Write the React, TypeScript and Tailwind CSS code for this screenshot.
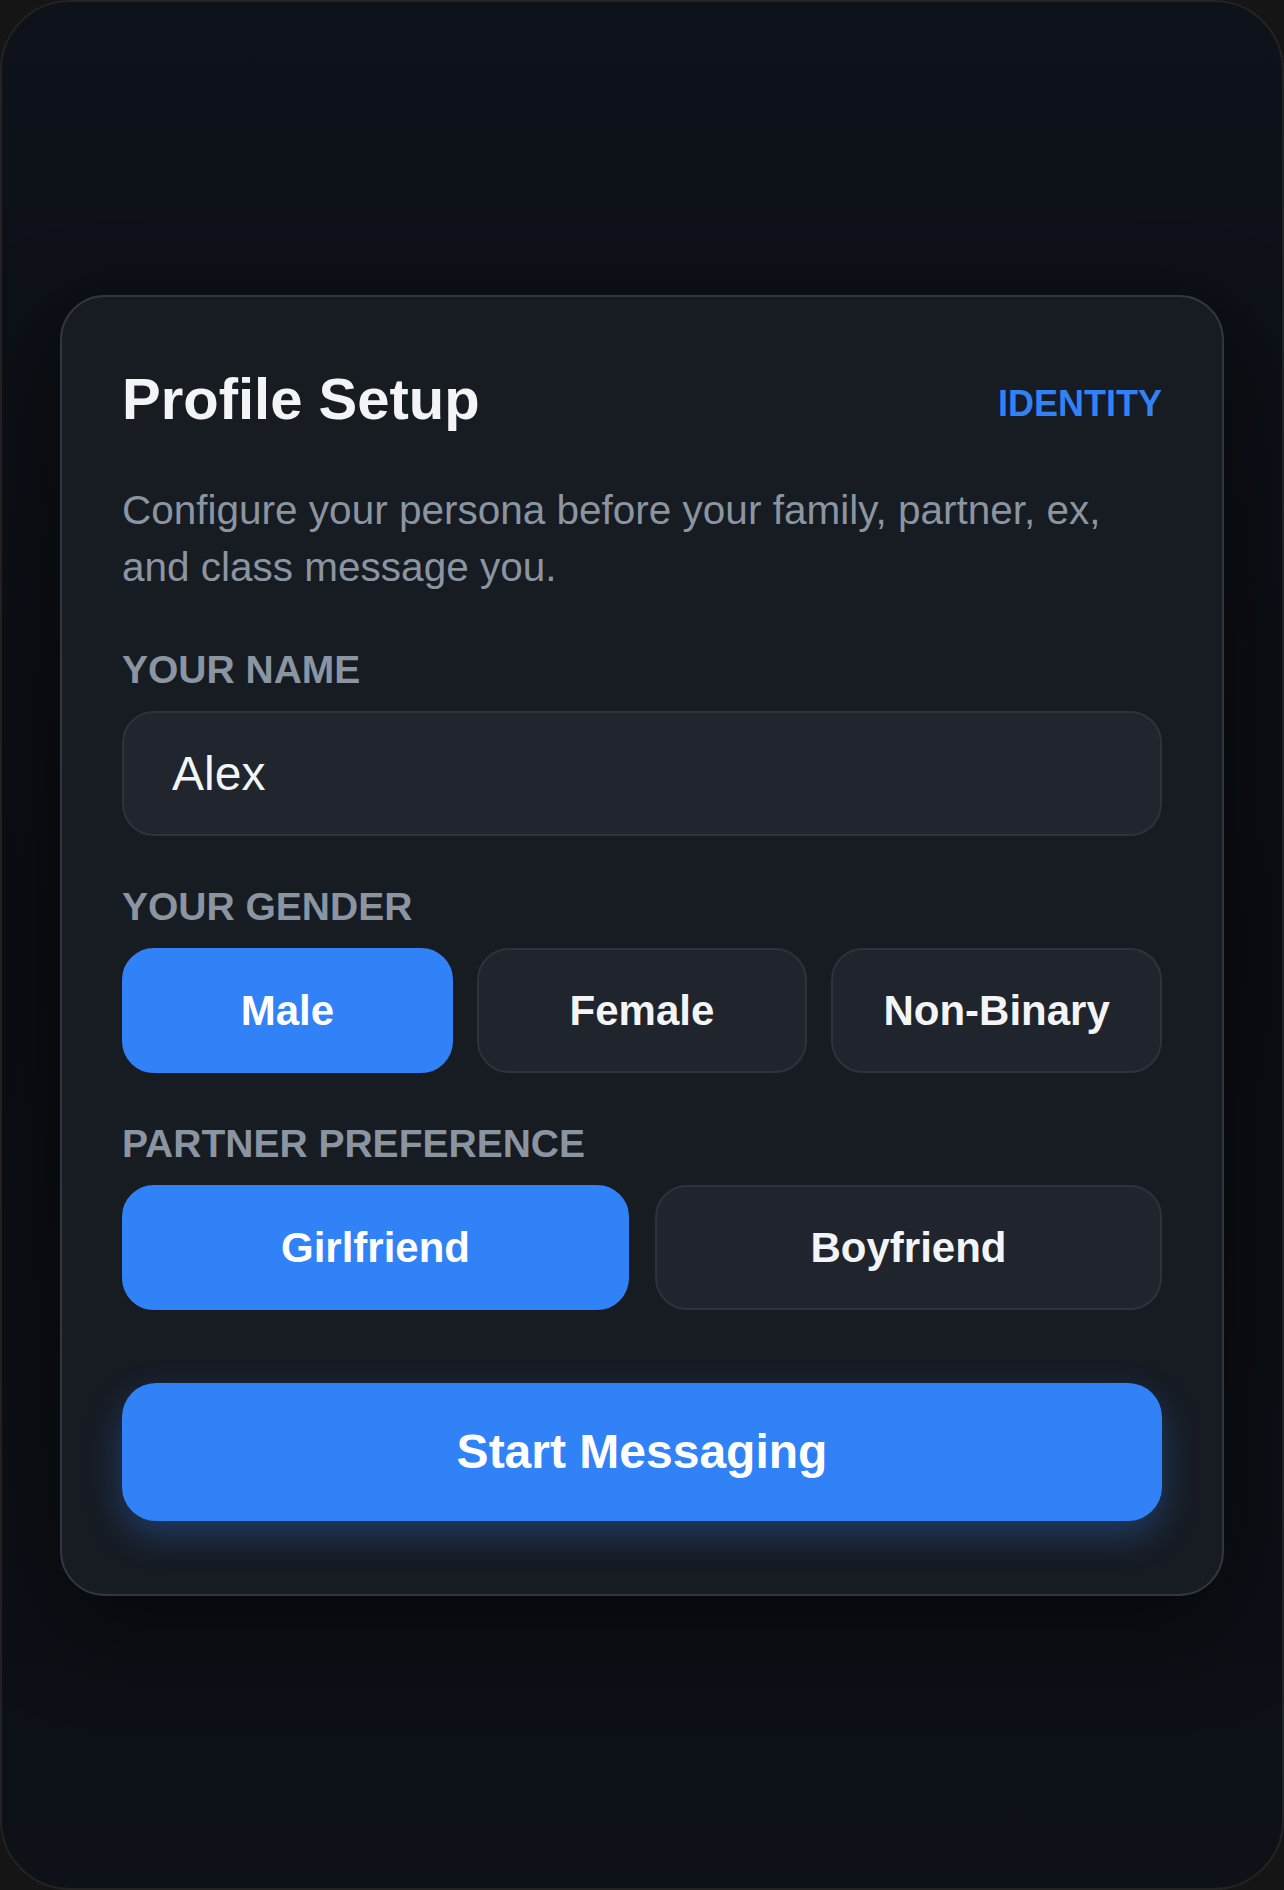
import React, { useState } from "react";

export default function App() {
  const [name, setName] = useState("Alex");
  const [gender, setGender] = useState("Male");
  const [partner, setPartner] = useState("Girlfriend");

  const optionClass = (active: boolean) =>
    active
      ? "h-[125px] rounded-[32px] border-2 border-[#3182f6] bg-[#3182f6] text-[42px] font-bold text-white"
      : "h-[125px] rounded-[32px] border-2 border-[#2e323a] bg-[#20242c] text-[42px] font-bold text-[#f2f4f6]";

  return (
    <div
      className="w-[1284px] h-[1890px] bg-[#151515]"
      style={{ fontFamily: '"Liberation Sans", Arial, sans-serif' }}
    >
      <div className="h-[1890px] w-full rounded-[70px] border-2 border-[#232323] bg-gradient-to-b from-[#0e121a] via-[#0a0d12] to-[#0d1118] flex items-center justify-center px-[58px]">
        <div className="w-full rounded-[45px] border-2 border-[#32363e] bg-[#171b22] px-[60px] pt-[71px] pb-[73px] shadow-[0_30px_90px_rgba(0,0,0,0.55)]">
          <div className="flex items-start justify-between">
            <h1 className="text-[58px] font-bold leading-[62px] text-[#f2f4f6]">
              Profile Setup
            </h1>
            <span className="mt-[14px] text-[36px] font-bold leading-[43px] text-[#3182f6]">
              IDENTITY
            </span>
          </div>

          <p className="mt-[52px] text-[40.5px] leading-[57px] text-[#8b95a1]">
            Configure your persona before your family, partner, ex, and class
            message you.
          </p>

          <div className="mt-[50px] text-[39px] font-bold leading-[47px] text-[#8b95a1]">
            YOUR NAME
          </div>
          <input
            value={name}
            onChange={(e) => setName(e.target.value)}
            className="mt-[18px] block h-[125px] w-full rounded-[32px] border-2 border-[#2e323a] bg-[#21252d] px-[48px] text-[48px] text-[#f2f4f6] outline-none"
          />

          <div className="mt-[47px] text-[39px] font-bold leading-[47px] text-[#8b95a1]">
            YOUR GENDER
          </div>
          <div className="mt-[18px] grid grid-cols-3 gap-[24px]">
            {["Male", "Female", "Non-Binary"].map((g) => (
              <button key={g} onClick={() => setGender(g)} className={optionClass(gender === g)}>
                {g}
              </button>
            ))}
          </div>

          <div className="mt-[47px] text-[39px] font-bold leading-[47px] text-[#8b95a1]">
            PARTNER PREFERENCE
          </div>
          <div className="mt-[18px] grid grid-cols-2 gap-[26px]">
            {["Girlfriend", "Boyfriend"].map((p) => (
              <button key={p} onClick={() => setPartner(p)} className={optionClass(partner === p)}>
                {p}
              </button>
            ))}
          </div>

          <button className="mt-[73px] block h-[138px] w-full rounded-[34px] bg-[#3182f6] text-[48px] font-bold text-white shadow-[0_14px_36px_rgba(49,130,246,0.32)]">
            Start Messaging
          </button>
        </div>
      </div>
    </div>
  );
}
